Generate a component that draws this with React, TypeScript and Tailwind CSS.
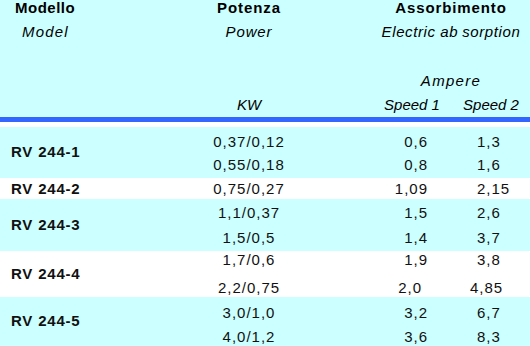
type Line = { kw: string; s1: string; s2: string; s1Cls?: string; s2Cls?: string };

type Group = {
  model: string;
  bg: string;
  height: string;
  pad: string;
  gap: string;
  lines: Line[];
};

const groups: Group[] = [
  {
    model: 'RV 244-1',
    bg: 'bg-[#ccffff]',
    height: 'h-[51px]',
    pad: 'pt-[6px]',
    gap: 'gap-[5px]',
    lines: [
      { kw: '0,37/0,12', s1: '0,6', s2: '1,3' },
      { kw: '0,55/0,18', s1: '0,8', s2: '1,6' },
    ],
  },
  {
    model: 'RV 244-2',
    bg: 'bg-white',
    height: 'h-[21px]',
    pad: 'pt-[2px]',
    gap: 'gap-0',
    lines: [{ kw: '0,75/0,27', s1: '1,09', s2: '2,15' }],
  },
  {
    model: 'RV 244-3',
    bg: 'bg-[#ccffff]',
    height: 'h-[52px]',
    pad: 'pt-[5px]',
    gap: 'gap-[7px]',
    lines: [
      { kw: '1,1/0,37', s1: '1,5', s2: '2,6' },
      { kw: '1,5/0,5', s1: '1,4', s2: '3,7' },
    ],
  },
  {
    model: 'RV 244-4',
    bg: 'bg-white',
    height: 'h-[46px]',
    pad: 'pt-0',
    gap: 'gap-[10px]',
    lines: [
      { kw: '1,7/0,6', s1: '1,9', s2: '3,8' },
      { kw: '2,2/0,75', s1: '2,0', s2: '4,85', s1Cls: 'mr-[6px]', s2Cls: '-ml-[7px]' },
    ],
  },
  {
    model: 'RV 244-5',
    bg: 'bg-[#ccffff]',
    height: 'h-[49px]',
    pad: 'pt-[7px]',
    gap: 'gap-[6px]',
    lines: [
      { kw: '3,0/1,0', s1: '3,2', s2: '6,7' },
      { kw: '4,0/1,2', s1: '3,6', s2: '8,3' },
    ],
  },
];

const cols = 'grid grid-cols-[190px_118px_64px_80px_78px]';

export default function App() {
  return (
    <div className="w-[530px] h-[346px] overflow-hidden bg-[#ccffff] text-black font-['Liberation_Sans',Arial,sans-serif] text-[15px]">
      {/* Header */}
      <div className={`${cols} grid-rows-[17px_31px_21px_24px_24px]`}>
        <div className="flex items-center pl-[15px] font-bold tracking-[0.5px]">Modello</div>
        <div className="flex items-center justify-center font-bold tracking-[0.9px]">Potenza</div>
        <div />
        <div className="col-span-2 flex items-center justify-center font-bold tracking-[0.9px]">Assorbimento</div>

        <div className="flex items-center pl-[22px] italic tracking-[1.2px]">Model</div>
        <div className="flex items-center justify-center italic tracking-[0.9px]">Power</div>
        <div />
        <div className="col-span-2 flex items-center justify-center italic tracking-[0.6px]">
          <span className="mr-[4px]">Electric ab</span>sorption
        </div>

        <div className="col-span-5" />

        <div className="col-span-3" />
        <div className="col-span-2 flex items-center justify-center italic tracking-[1.3px]">Ampere</div>

        <div />
        <div className="flex items-center justify-center italic">KW</div>
        <div />
        <div className="flex items-center justify-center italic">Speed 1</div>
        <div className="flex items-center justify-center italic">Speed 2</div>
      </div>

      {/* Divider */}
      <div className="h-[5px] bg-[#3366ff]" />
      <div className="h-[5px] bg-white" />

      {/* Rows */}
      {groups.map((g) => (
        <div key={g.model} className={`${cols} ${g.bg} ${g.height} text-[#111]`}>
          <div className="flex items-center pl-[11px] font-bold tracking-[0.8px]">{g.model}</div>
          <div className={`flex flex-col items-center ${g.pad} ${g.gap} tracking-[1px]`}>
            {g.lines.map((l) => (
              <div key={l.kw} className="h-[18px] leading-[18px]">{l.kw}</div>
            ))}
          </div>
          <div />
          <div className={`flex flex-col items-end pr-[24px] ${g.pad} ${g.gap} tracking-[1px]`}>
            {g.lines.map((l) => (
              <div key={l.kw} className={`h-[18px] leading-[18px] ${l.s1Cls ?? ''}`}>{l.s1}</div>
            ))}
          </div>
          <div className={`flex flex-col items-start pl-[25px] ${g.pad} ${g.gap} tracking-[1px]`}>
            {g.lines.map((l) => (
              <div key={l.kw} className={`h-[18px] leading-[18px] ${l.s2Cls ?? ''}`}>{l.s2}</div>
            ))}
          </div>
        </div>
      ))}
    </div>
  );
}
